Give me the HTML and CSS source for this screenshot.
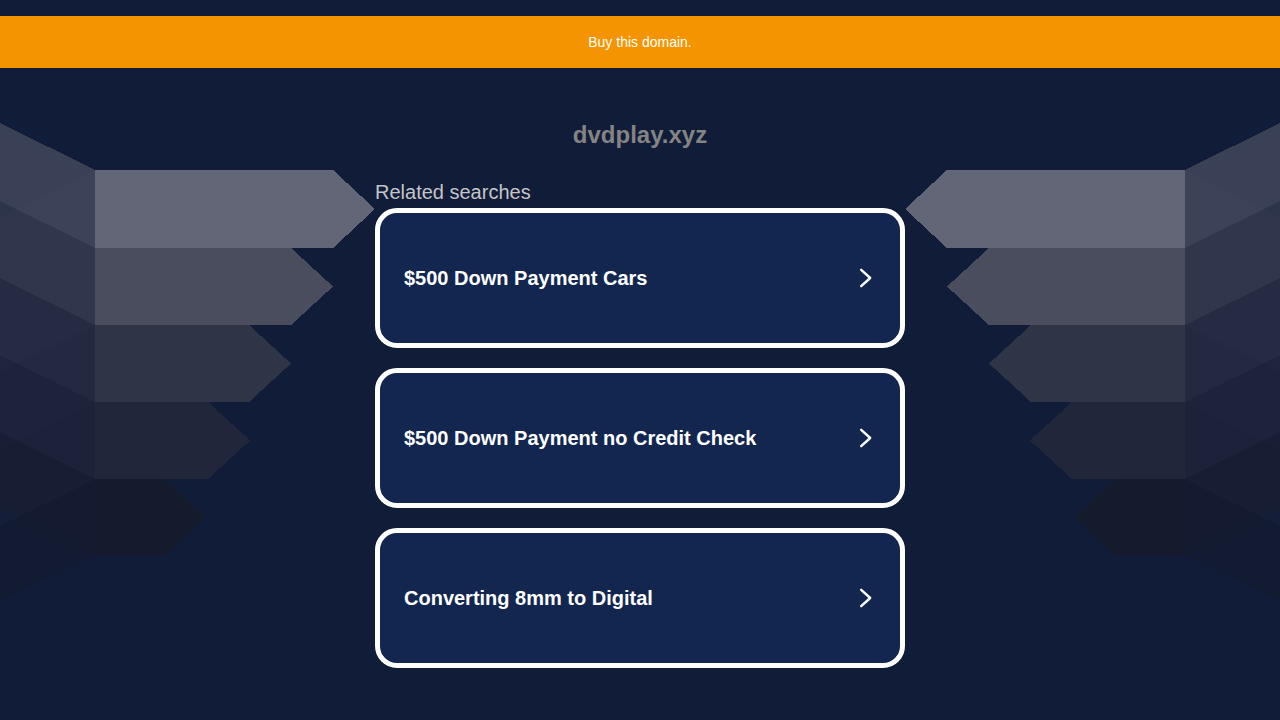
FILE: index.html
```html
<!DOCTYPE html>
<html lang="en">
<head>
<meta charset="utf-8">
<title>dvdplay.xyz</title>
<link rel="stylesheet" href="styles.css">
</head>
<body>
<svg class="wings" width="1280" height="720" viewBox="0 0 1280 720" aria-hidden="true">
  <defs>
    <g id="wing" shape-rendering="crispEdges">
      <!-- left faces: up-slanted -->
      <polygon points="0,123 95,170 95,248 0,201" fill="#636676" fill-opacity="0.5"/>
      <polygon points="0,201 95,248 95,325 0,278" fill="#4a4d5e" fill-opacity="0.5"/>
      <polygon points="0,278 95,325 95,402 0,355" fill="#2f3447" fill-opacity="0.5"/>
      <polygon points="0,355 95,402 95,479 0,432" fill="#21263a" fill-opacity="0.5"/>
      <polygon points="0,432 95,479 95,556 0,509" fill="#161a2d" fill-opacity="0.5"/>
      <!-- left faces: down-slanted -->
      <polygon points="0,217 95,170 95,248 0,295" fill="#636676" fill-opacity="0.06"/>
      <polygon points="0,295 95,248 95,325 0,372" fill="#4a4d5e" fill-opacity="0.1"/>
      <polygon points="0,372 95,325 95,402 0,449" fill="#2f3447" fill-opacity="0.16"/>
      <polygon points="0,449 95,402 95,479 0,526" fill="#21263a" fill-opacity="0.26"/>
      <polygon points="0,526 95,479 95,556 0,603" fill="#161a2d" fill-opacity="0.45"/>
      <!-- arrow rows -->
      <polygon points="95,170 333,170 375,209 333,248 95,248" fill="#636676"/>
      <polygon points="95,248 291,248 333,286.5 291,325 95,325" fill="#4a4d5e"/>
      <polygon points="95,325 249,325 291,363.5 249,402 95,402" fill="#2f3447"/>
      <polygon points="95,402 208,402 250,440.5 208,479 95,479" fill="#21263a"/>
      <polygon points="95,479 165,479 206,517.5 165,556 95,556" fill="#161a2d"/>
    </g>
  </defs>
  <use href="#wing"/>
  <use href="#wing" transform="matrix(-1 0 0 1 1280 0)"/>
</svg>

<div class="page">
  <div class="banner">Buy this domain.</div>
  <main class="content">
    <h1 class="domain">dvdplay.xyz</h1>
    <h2 class="related">Related searches</h2>
    <div class="cards">
      <a class="card" href="#">
        <span class="card-text">$500 Down Payment Cars</span>
        <svg class="chev" width="14" height="20" viewBox="0 0 14 20"><path d="M2.2 1.8 L11.2 10 L2.2 18.2" fill="none" stroke="#fff" stroke-width="2.4" stroke-linecap="round" stroke-linejoin="round"/></svg>
      </a>
      <a class="card" href="#">
        <span class="card-text">$500 Down Payment no Credit Check</span>
        <svg class="chev" width="14" height="20" viewBox="0 0 14 20"><path d="M2.2 1.8 L11.2 10 L2.2 18.2" fill="none" stroke="#fff" stroke-width="2.4" stroke-linecap="round" stroke-linejoin="round"/></svg>
      </a>
      <a class="card" href="#">
        <span class="card-text">Converting 8mm to Digital</span>
        <svg class="chev" width="14" height="20" viewBox="0 0 14 20"><path d="M2.2 1.8 L11.2 10 L2.2 18.2" fill="none" stroke="#fff" stroke-width="2.4" stroke-linecap="round" stroke-linejoin="round"/></svg>
      </a>
    </div>
  </main>
</div>
</body>
</html>
```

FILE: styles.css
```css
* { box-sizing: border-box; }

html, body {
  margin: 0;
  padding: 0;
  height: 720px;
  overflow: hidden;
}

body {
  background: #101c38;
  font-family: "Liberation Sans", Arial, sans-serif;
  position: relative;
}

.wings {
  position: absolute;
  left: 0;
  top: 0;
  z-index: 0;
  display: block;
}

.page {
  position: relative;
  z-index: 1;
  padding-top: 16px;
}

.banner {
  height: 52px;
  background: #f39400;
  color: #ffffff;
  font-size: 14px;
  display: flex;
  align-items: center;
  justify-content: center;
}

.content {
  width: 530px;
  margin: 0 auto;
  padding-top: 53px;
}

.domain {
  margin: 0;
  text-align: center;
  font-size: 24px;
  line-height: 28px;
  font-weight: bold;
  color: #848484;
}

.related {
  margin: 31px 0 4px 0;
  font-size: 20px;
  line-height: 24px;
  font-weight: normal;
  color: #c4c4c8;
}

.cards {
  display: flex;
  flex-direction: column;
  gap: 20px;
}

.card {
  height: 140px;
  border: 5px solid #ffffff;
  border-radius: 22px;
  background: #12264f;
  display: flex;
  align-items: center;
  justify-content: space-between;
  padding: 0 27px 0 24px;
  text-decoration: none;
  color: #ffffff;
}

.card-text {
  font-size: 20px;
  font-weight: bold;
  color: #ffffff;
}

.chev {
  display: block;
}
```
